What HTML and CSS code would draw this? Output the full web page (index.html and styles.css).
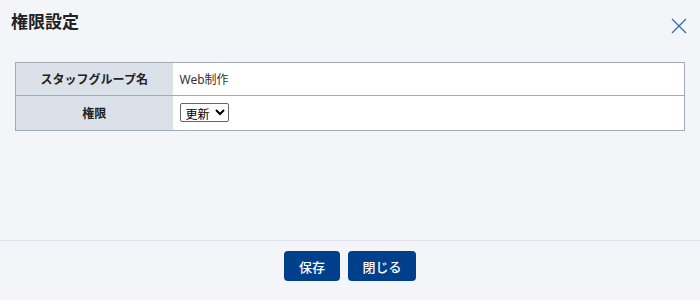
FILE: index.html
```html
<!DOCTYPE html>
<html lang="ja">
<head>
    <meta charset="UTF-8">
    <title>権限設定</title>
    <link rel="stylesheet" href="styles.css">
</head>
<body>
    <div class="modal">
        <div class="modal-header">
            <h1 class="modal-title">権限設定</h1>
            <button class="btn-close" aria-label="閉じる">
                <svg width="16" height="16" viewBox="0 0 16 16">
                    <path d="M1 1 L15 15 M15 1 L1 15" stroke="#2f6cc0" stroke-width="1.3" fill="none"/>
                </svg>
            </button>
        </div>

        <div class="modal-body">
            <table class="form-table">
                <tr class="row-name">
                    <th>スタッフグループ名</th>
                    <td>Web制作</td>
                </tr>
                <tr class="row-role">
                    <th>権限</th>
                    <td>
                        <select class="role-select">
                            <option>更新</option>
                            <option>閲覧</option>
                        </select>
                    </td>
                </tr>
            </table>
        </div>

        <div class="modal-footer">
            <button class="btn btn-primary">保存</button>
            <button class="btn btn-primary btn-wide">閉じる</button>
        </div>
    </div>
</body>
</html>
```

FILE: styles.css
```css
:root {
    --bg: #f4f5f9;
    --navy: #003f8b;
    --border: #a0abb6;
    --head: #dbe1e8;
    --text: #222;
}

* {
    margin: 0;
    padding: 0;
    box-sizing: border-box;
}

body {
    background: var(--bg);
    font-family: "Noto Sans", "Noto Sans CJK JP", sans-serif;
    color: var(--text);
}

.modal {
    height: 300px;
    display: flex;
    flex-direction: column;
}

.modal-header {
    display: flex;
    justify-content: space-between;
    align-items: flex-start;
    padding: 10px 13px 0 11px;
    height: 62px;
}

.modal-title {
    font-size: 17px;
    font-weight: bold;
    line-height: 24px;
    color: #222;
}

.btn-close {
    background: none;
    border: none;
    margin-top: 8px;
    width: 16px;
    height: 16px;
    cursor: pointer;
}

.btn-close svg {
    display: block;
}

.modal-body {
    flex: 1;
    padding: 0 15px;
}

.form-table {
    width: 670px;
    border-collapse: collapse;
    border: 1px solid var(--border);
    font-size: 12px;
}

.form-table th,
.form-table td {
    border-bottom: 1px solid var(--border);
}

.form-table th {
    width: 157px;
    background: var(--head);
    font-weight: bold;
    text-align: center;
    color: #222;
}

.form-table td {
    background: white;
    padding: 0 7px;
    color: #333;
}

.row-name {
    height: 33px;
}

.row-role {
    height: 35px;
}

.role-select {
    font-family: "Noto Sans CJK JP", sans-serif;
    font-size: 12px;
    color: #000;
    height: 19px;
    border: 1px solid #666;
    border-radius: 2px;
    background: white;
    padding: 0 1px;
}

.modal-footer {
    border-top: 1px solid #dde0e6;
    height: 60px;
    padding-top: 10px;
    display: flex;
    justify-content: center;
    align-items: flex-start;
    gap: 8px;
}

.btn {
    height: 30px;
    border: none;
    border-radius: 4px;
    font-family: "Noto Sans CJK JP", sans-serif;
    font-size: 13px;
    font-weight: 500;
    cursor: pointer;
}

.btn-primary {
    background: var(--navy);
    color: white;
    width: 56px;
}

.btn-wide {
    width: 68px;
}
```
